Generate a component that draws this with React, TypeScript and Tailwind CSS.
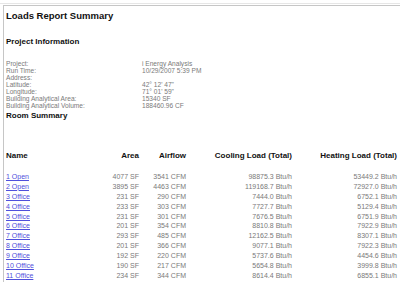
const info: [string, string][] = [
  ["Project:", "i Energy Analysis"],
  ["Run Time:", "10/29/2007 5:39 PM"],
  ["Address:", ""],
  ["Latitude:", "42° 12' 47\""],
  ["Longitude:", "71° 01' 59\""],
  ["Building Analytical Area:", "15340 SF"],
  ["Building Analytical Volume:", "188460.96 CF"],
];

const rooms = [
  { name: "1 Open", area: "4077 SF", airflow: "3541 CFM", cooling: "98875.3 Btu/h", heating: "53449.2 Btu/h" },
  { name: "2 Open", area: "3895 SF", airflow: "4463 CFM", cooling: "119168.7 Btu/h", heating: "72927.0 Btu/h" },
  { name: "3 Office", area: "231 SF", airflow: "290 CFM", cooling: "7444.0 Btu/h", heating: "6752.1 Btu/h" },
  { name: "4 Office", area: "233 SF", airflow: "303 CFM", cooling: "7727.7 Btu/h", heating: "5129.4 Btu/h" },
  { name: "5 Office", area: "231 SF", airflow: "301 CFM", cooling: "7676.5 Btu/h", heating: "6751.9 Btu/h" },
  { name: "6 Office", area: "201 SF", airflow: "354 CFM", cooling: "8810.8 Btu/h", heating: "7922.9 Btu/h" },
  { name: "7 Office", area: "293 SF", airflow: "485 CFM", cooling: "12162.5 Btu/h", heating: "8307.1 Btu/h" },
  { name: "8 Office", area: "201 SF", airflow: "366 CFM", cooling: "9077.1 Btu/h", heating: "7922.3 Btu/h" },
  { name: "9 Office", area: "192 SF", airflow: "220 CFM", cooling: "5737.6 Btu/h", heating: "4454.6 Btu/h" },
  { name: "10 Office", area: "190 SF", airflow: "217 CFM", cooling: "5654.8 Btu/h", heating: "3999.8 Btu/h" },
  { name: "11 Office", area: "234 SF", airflow: "344 CFM", cooling: "8614.4 Btu/h", heating: "6855.1 Btu/h" },
];

const cols = "grid grid-cols-[90px_43px_47px_106px_105px]";

export default function App() {
  return (
    <div className="h-[282px] w-[400px] overflow-hidden bg-white pt-[3px] font-['Liberation_Sans',Arial,sans-serif]">
      {/* double frame line, like the report viewer's inset border */}
      <div className="border-t border-[#e6e6e6] pt-px">
        <div className="ml-[3px] h-[300px] border-l border-t border-[#c6c6c6] pl-[2px]">
          <h1 className="mt-[4px] h-[12px] text-[9.5px] leading-[12px] font-bold text-[#111]">
            Loads Report Summary
          </h1>

          <h2 className="mt-[15px] h-[10px] text-[8px] leading-[10px] font-bold text-[#111]">
            Project Information
          </h2>

          <div className="mt-[12.5px]">
            {info.map(([label, value]) => (
              <div key={label} className="flex h-[7px] text-[6.6px] leading-[7px] text-[#7a7a7a]">
                <span className="w-[136px] shrink-0">{label}</span>
                <span>{value}</span>
              </div>
            ))}
          </div>

          <h2 className="mt-[2.5px] h-[10px] text-[8px] leading-[10px] font-bold text-[#111]">
            Room Summary
          </h2>

          {/* room table */}
          <div className={`${cols} mt-[30px] h-[10px] text-[8px] leading-[10px] font-bold text-[#111]`}>
            <span>Name</span>
            <span className="text-right">Area</span>
            <span className="text-right">Airflow</span>
            <span className="text-right">Cooling Load (Total)</span>
            <span className="text-right">Heating Load (Total)</span>
          </div>

          <div className="mt-[11px]">
            {rooms.map((r) => (
              <div key={r.name} className={`${cols} h-[9.9px] text-[7px] leading-[9.9px] text-[#7a7a7a]`}>
                <a href="#" className="text-[#5050dc] underline">
                  {r.name}
                </a>
                <span className="text-right">{r.area}</span>
                <span className="text-right">{r.airflow}</span>
                <span className="text-right">{r.cooling}</span>
                <span className="text-right">{r.heating}</span>
              </div>
            ))}
          </div>
        </div>
      </div>
    </div>
  );
}
